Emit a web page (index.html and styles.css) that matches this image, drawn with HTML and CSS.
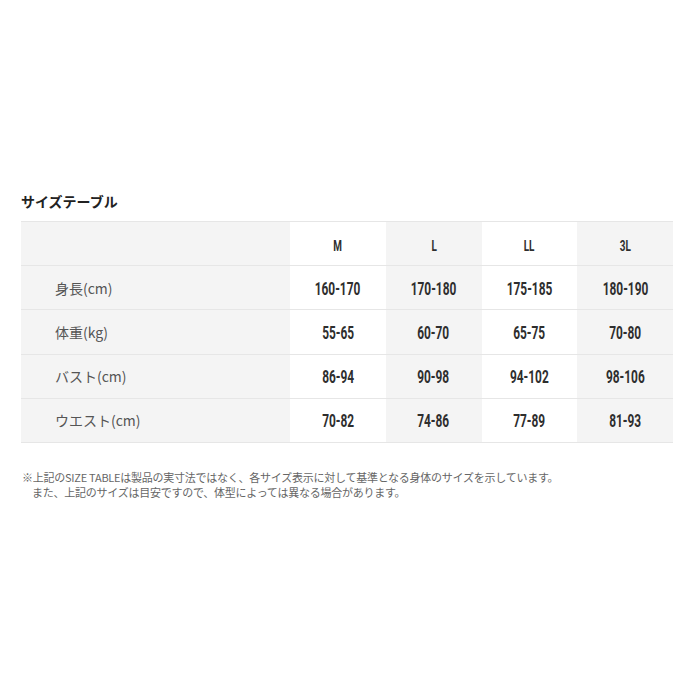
FILE: index.html
```html
<!DOCTYPE html>
<html lang="ja">
<head>
<meta charset="utf-8">
<link rel="stylesheet" href="styles.css">
</head>
<body>
<div class="wrap">
  <h2 class="title">サイズテーブル</h2>
  <table class="size">
    <thead>
      <tr><th class="lab"></th><th class="w"><span class="n h">M</span></th><th class="g"><span class="n h">L</span></th><th class="w"><span class="n h">LL</span></th><th class="g"><span class="n h">3L</span></th></tr>
    </thead>
    <tbody>
      <tr><th class="lab">身長(cm)</th><td class="w"><span class="n">160-170</span></td><td class="g"><span class="n">170-180</span></td><td class="w"><span class="n">175-185</span></td><td class="g"><span class="n">180-190</span></td></tr>
      <tr><th class="lab">体重(kg)</th><td class="w"><span class="n">55-65</span></td><td class="g"><span class="n">60-70</span></td><td class="w"><span class="n">65-75</span></td><td class="g"><span class="n">70-80</span></td></tr>
      <tr><th class="lab">バスト(cm)</th><td class="w"><span class="n">86-94</span></td><td class="g"><span class="n">90-98</span></td><td class="w"><span class="n">94-102</span></td><td class="g"><span class="n">98-106</span></td></tr>
      <tr><th class="lab">ウエスト(cm)</th><td class="w"><span class="n">70-82</span></td><td class="g"><span class="n">74-86</span></td><td class="w"><span class="n">77-89</span></td><td class="g"><span class="n">81-93</span></td></tr>
    </tbody>
  </table>
  <p class="note">※上記のSIZE TABLEは製品の実寸法ではなく、各サイズ表示に対して基準となる身体のサイズを示しています。<br><span class="ind">また、上記のサイズは目安ですので、体型によっては異なる場合があります。</span></p>
</div>
</body>
</html>
```
FILE: styles.css
```css
html, body { margin: 0; padding: 0; background: #fff; }
body { font-family: "Noto Sans CJK JP", "Noto Sans", sans-serif; color: #333; }
.wrap { padding: 192px 27px 0 21px; }
.title { margin: 0 0 10px 0; font-size: 14px; font-weight: bold; line-height: 19px; color: #222; }
.size { width: 652px; border-collapse: collapse; table-layout: fixed; }
.size tr { height: 44.2px; border-top: 1px solid #e6e6e6; border-bottom: 1px solid #e6e6e6; }
.size th, .size td { padding: 0; text-align: center; vertical-align: middle; }
.lab { width: 235px; background: #f4f4f4; text-align: left !important; padding-left: 34px !important; font-size: 14px; font-weight: normal; color: #555; }
.w { background: #fff; }
.g { background: #f4f4f4; }
.n {
  display: inline-block;
  font-family: Roboto, "Liberation Sans", sans-serif;
  font-weight: 700;
  font-size: 18px;
  line-height: 20px;
  color: #2e2e2e;
  transform: scaleX(0.66);
}
.n.h { font-size: 15px; }
.note { margin: 27px 0 0 1px; font-size: 11px; line-height: 15px; color: #666; letter-spacing: -0.25px; }
.ind { padding-left: 10px; }
```
